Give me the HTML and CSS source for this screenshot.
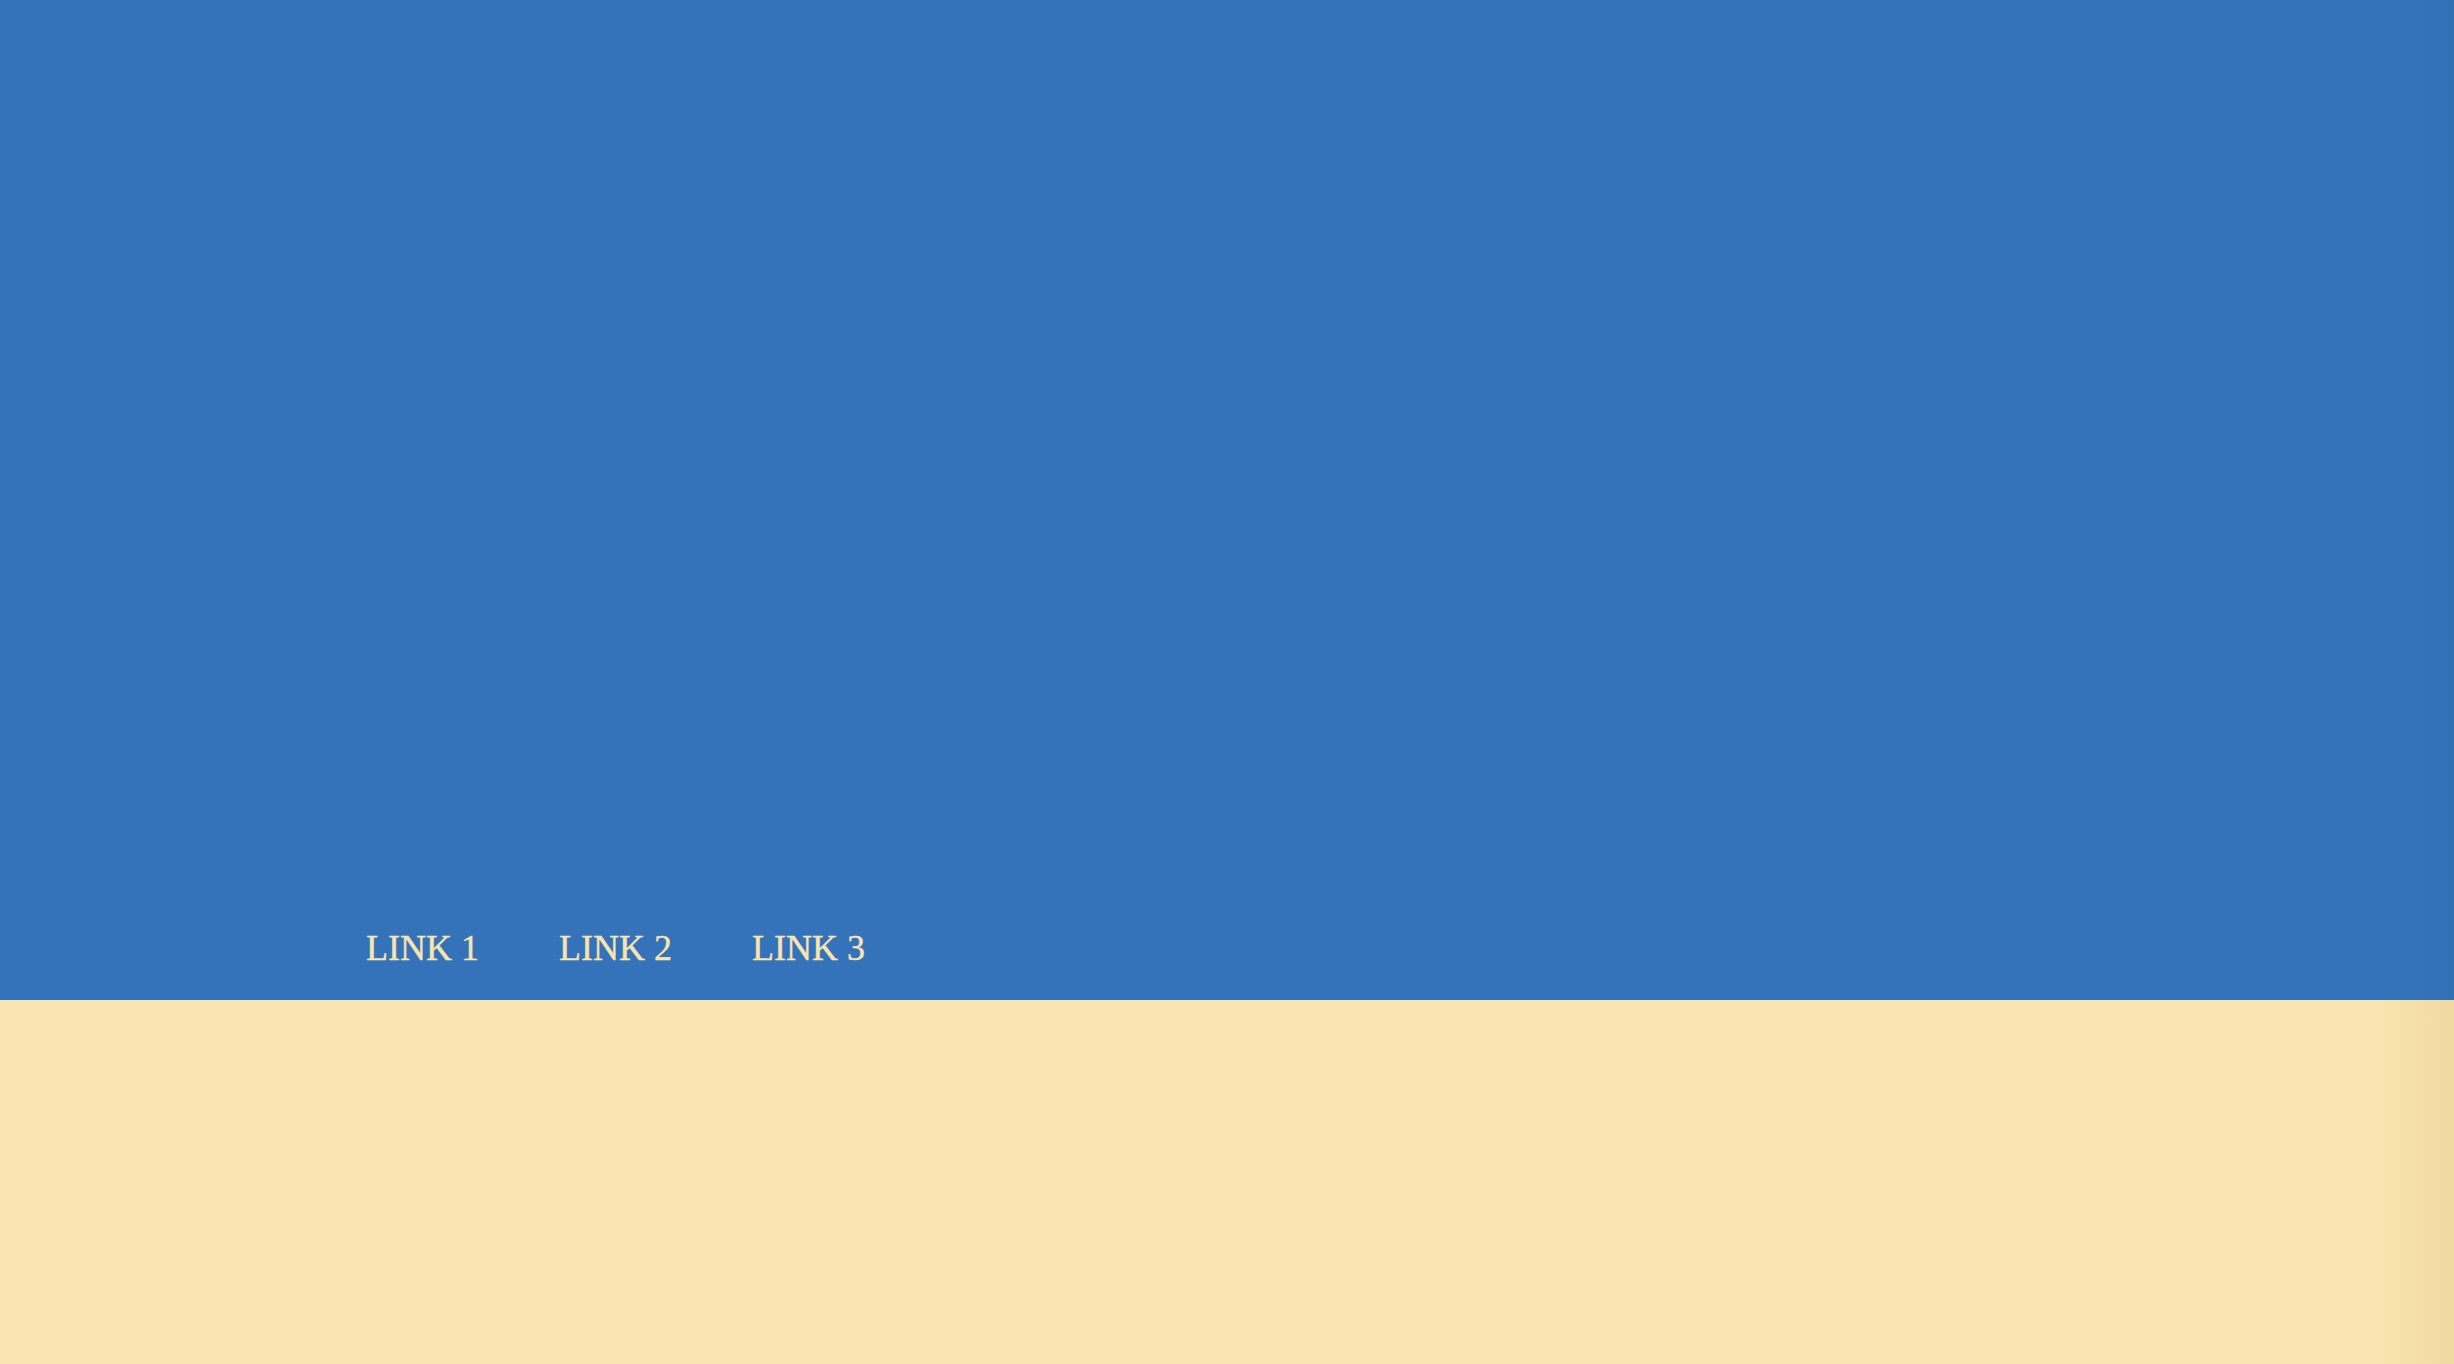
FILE: index.html
```html
<!DOCTYPE html>
<html>
<head>
<meta charset="utf-8">
<link rel="stylesheet" href="styles.css">
</head>
<body>
<header class="hero">
  <nav class="nav">
    <a class="nav-link" href="#">LINK 1</a>
    <a class="nav-link" href="#">LINK 2</a>
    <a class="nav-link" href="#">LINK 3</a>
  </nav>
</header>
<main class="content"></main>
</body>
</html>
```

FILE: styles.css
```css
html, body {
  margin: 0;
  padding: 0;
  height: 100%;
}
body {
  background: #f9e4af;
  font-family: "Liberation Serif", "Times New Roman", serif;
  display: flex;
  flex-direction: column;
}
.hero {
  background: linear-gradient(to right, #3472b9 0%, #3472b9 98.5%, #3270b4 100%);
  height: 1000px;
  display: flex;
  flex-direction: column;
  justify-content: flex-end;
  box-sizing: border-box;
  padding-bottom: 32px;
}
.nav {
  display: flex;
  gap: 80px;
  padding-left: 366px;
}
.nav-link {
  color: #f9e4af;
  text-decoration: none;
  font-size: 36px;
  line-height: 40px;
  -webkit-text-stroke: 0.4px #f9e4af;
}
.content {
  flex: 1;
  background: linear-gradient(to right, #f9e4af 0%, #f9e4af 97%, #f1d9a1 100%);
}
```
